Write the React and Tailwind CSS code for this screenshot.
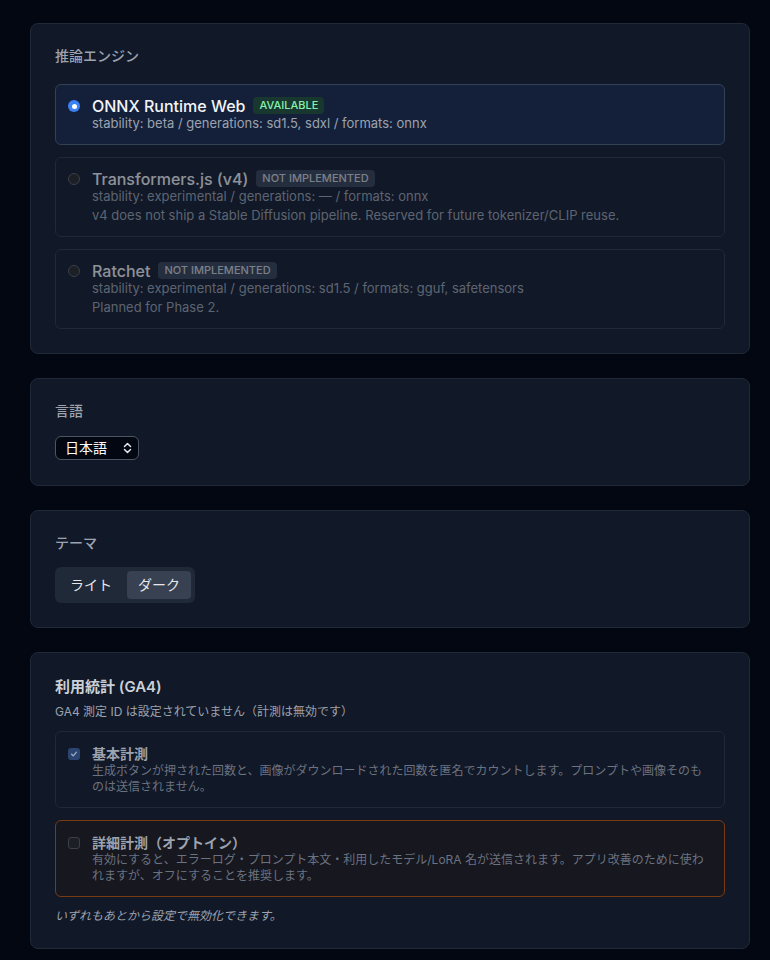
import React, { useState } from 'react';

const engines = [
  {
    id: 'ort',
    name: 'ONNX Runtime Web',
    status: 'AVAILABLE',
    meta: 'stability: beta / generations: sd1.5, sdxl / formats: onnx',
    note: null,
  },
  {
    id: 'tfjs',
    name: 'Transformers.js (v4)',
    status: 'NOT IMPLEMENTED',
    meta: 'stability: experimental / generations: — / formats: onnx',
    note: 'v4 does not ship a Stable Diffusion pipeline. Reserved for future tokenizer/CLIP reuse.',
  },
  {
    id: 'ratchet',
    name: 'Ratchet',
    status: 'NOT IMPLEMENTED',
    meta: 'stability: experimental / generations: sd1.5 / formats: gguf, safetensors',
    note: 'Planned for Phase 2.',
  },
];

function Card({ children, top = 'pt-[22px]' }) {
  return (
    <section className={`rounded-lg border border-[#1f2937] bg-[#111827] px-6 pb-6 ${top}`}>
      {children}
    </section>
  );
}

function EngineOption({ engine, selected }) {
  const available = engine.status === 'AVAILABLE';
  return (
    <div
      className={`flex gap-3 rounded-md border px-3 py-3 ${
        selected ? 'border-[#334155] bg-[#14203a]' : 'border-[#1f2937] bg-[#111827]'
      }`}
    >
      <div className="pt-[3px]">
        {selected ? (
          <span className="flex h-3 w-3 items-center justify-center rounded-full bg-[#3b82f6]">
            <span className="h-[5px] w-[5px] rounded-full bg-white" />
          </span>
        ) : (
          <span className="block h-3 w-3 rounded-full border border-[#3b3f47] bg-[#1c1f26]" />
        )}
      </div>
      <div className={available ? '' : 'opacity-55'}>
        <div className="flex items-center gap-2">
          <span className="text-base leading-4 font-medium text-[#f3f4f6]">{engine.name}</span>
          <span
            className={`rounded px-1.5 text-[11px] leading-[17px] font-medium ${
              available ? 'bg-[#18372f] text-[#86efac]' : 'bg-[#374151] text-[#d1d5db]'
            }`}
          >
            {engine.status}
          </span>
        </div>
        <div className="text-[13px] leading-[18px] text-[#9ca3af]">{engine.meta}</div>
        {engine.note && (
          <div className="mt-px text-[13px] leading-[18px] text-[#9ca3af]">{engine.note}</div>
        )}
      </div>
    </div>
  );
}

function Consent({ title, text, checked, warn }) {
  return (
    <div
      className={`flex gap-3 rounded-md border px-3 py-3 ${
        warn ? 'border-[#7c3a12] bg-[#16171f]' : 'border-[#1f2937] bg-[#111827]'
      }`}
    >
      <div className="pt-[4px]">
        {checked ? (
          <span className="flex h-3 w-3 items-center justify-center rounded-[3px] bg-[#2b4470]">
            <svg width="8" height="8" viewBox="0 0 9 9" fill="none" stroke="#9fb0c8" strokeWidth="1.4" strokeLinecap="round" strokeLinejoin="round">
              <path d="M1.8 4.8L3.7 6.6L7.2 2.4" />
            </svg>
          </span>
        ) : (
          <span className="block h-3 w-3 rounded-[3px] border border-[#3b3f47] bg-[#1c1f26]" />
        )}
      </div>
      <div>
        <div className="text-sm leading-[19px] font-semibold text-[#9ca3af]">{title}</div>
        <div className="text-xs leading-4 text-[#6b7280]">{text}</div>
      </div>
    </div>
  );
}

export default function App() {
  const [engine] = useState('ort');
  const [theme, setTheme] = useState('dark');

  return (
    <div
      className="min-h-screen bg-[#030712] pt-[23px] pr-[20px] pb-6 pl-[30px]"
      style={{ fontFamily: '"Inter", "Noto Sans CJK JP", sans-serif' }}
    >
      <div className="flex flex-col gap-6">
        <Card>
          <h3 className="mb-[18px] text-sm leading-5 font-medium text-[#9ca3af]">推論エンジン</h3>
          <div className="flex flex-col gap-3">
            {engines.map(e => (
              <EngineOption key={e.id} engine={e} selected={e.id === engine} />
            ))}
          </div>
        </Card>

        <Card>
          <h3 className="mb-[15px] text-sm leading-5 font-medium text-[#9ca3af]">言語</h3>
          <div className="mb-px flex h-6 w-[84px] items-center justify-between rounded-md border border-[#4b5563] bg-[#030712] pr-[6px] pl-[9px] text-sm text-white">
            <span>日本語</span>
            <svg width="9" height="12" viewBox="0 0 9 12" fill="none" stroke="#e5e7eb" strokeWidth="1.5" strokeLinecap="round" strokeLinejoin="round">
              <path d="M1.5 4.5L4.5 1.5L7.5 4.5" />
              <path d="M1.5 7.5L4.5 10.5L7.5 7.5" />
            </svg>
          </div>
        </Card>

        <Card>
          <h3 className="mb-[14px] text-sm leading-5 font-medium text-[#9ca3af]">テーマ</h3>
          <div className="inline-flex gap-1 rounded-md bg-[#1f2937] p-1">
            <button
              onClick={() => setTheme('light')}
              className={`rounded px-[11px] py-1 text-sm leading-5 text-[#e5e7eb] ${theme === 'light' ? 'bg-[#374151]' : ''}`}
            >
              ライト
            </button>
            <button
              onClick={() => setTheme('dark')}
              className={`rounded px-[11px] py-1 text-sm leading-5 text-[#e5e7eb] ${theme === 'dark' ? 'bg-[#374151]' : ''}`}
            >
              ダーク
            </button>
          </div>
        </Card>

        <Card top="pt-6">
          <h3 className="text-[15px] leading-5 font-semibold text-[#cbd0d7]">利用統計 (GA4)</h3>
          <p className="mt-[7px] text-xs leading-4 text-[#9ca3af]">
            GA4 測定 ID は設定されていません（計測は無効です）
          </p>
          <div className="mt-[11px] flex flex-col gap-3">
            <Consent
              checked
              title="基本計測"
              text="生成ボタンが押された回数と、画像がダウンロードされた回数を匿名でカウントします。プロンプトや画像そのものは送信されません。"
            />
            <Consent
              warn
              title="詳細計測（オプトイン）"
              text="有効にすると、エラーログ・プロンプト本文・利用したモデル/LoRA 名が送信されます。アプリ改善のために使われますが、オフにすることを推奨します。"
            />
          </div>
          <p className="mt-[11px] text-xs leading-4 italic text-[#9ca3af]">いずれもあとから設定で無効化できます。</p>
        </Card>
      </div>
    </div>
  );
}
